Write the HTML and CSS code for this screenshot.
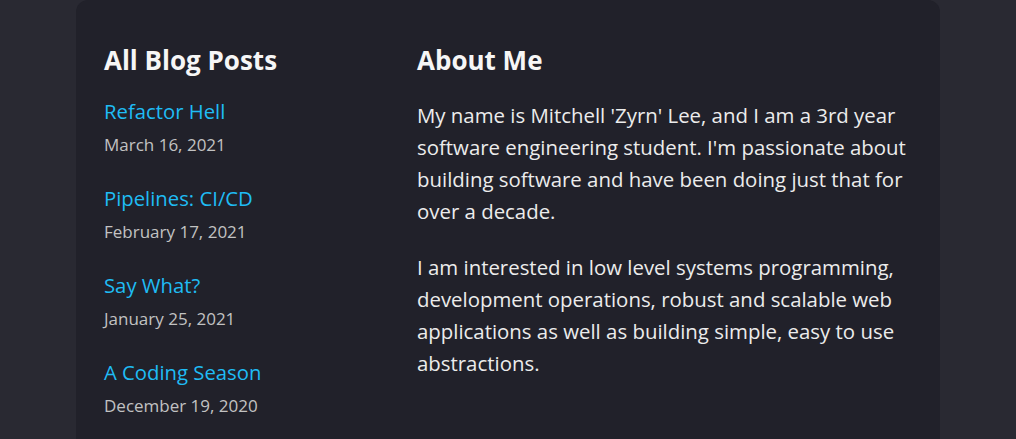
FILE: index.html
```html
<!DOCTYPE html>
<html>
<head>
<meta charset="utf-8">
<link rel="stylesheet" href="styles.css">
</head>
<body>
<main class="card">
  <section class="posts">
    <h2 class="heading">All Blog Posts</h2>
    <ul class="post-list">
      <li class="post"><a class="post-title" href="#">Refactor Hell</a><span class="post-date">March 16, 2021</span></li>
      <li class="post"><a class="post-title" href="#">Pipelines: CI/CD</a><span class="post-date">February 17, 2021</span></li>
      <li class="post"><a class="post-title" href="#">Say What?</a><span class="post-date">January 25, 2021</span></li>
      <li class="post"><a class="post-title" href="#">A Coding Season</a><span class="post-date">December 19, 2020</span></li>
    </ul>
  </section>
  <section class="about">
    <h2 class="heading heading-about">About Me</h2>
    <p class="about-text">My name is Mitchell 'Zyrn' Lee, and I am a 3rd year software engineering student. I'm passionate about building software and have been doing just that for over a decade.</p>
    <p class="about-text">I am interested in low level systems programming, development operations, robust and scalable web applications as well as building simple, easy to use abstractions.</p>
  </section>
</main>
</body>
</html>
```
FILE: styles.css
```css
html, body {
  margin: 0;
  padding: 0;
  background: #292932;
  font-family: "Open Sans", "Noto Sans", sans-serif;
  color: #ececec;
}
.card {
  width: 864px;
  margin: 0 auto;
  min-height: 460px;
  box-sizing: border-box;
  background: #21212a;
  border-radius: 12px 12px 0 0;
  padding: 42px 28px 0 28px;
  display: grid;
  grid-template-columns: 285px 1fr;
  column-gap: 28px;
}
.heading {
  margin: 0 0 17px;
  font-size: 26px;
  line-height: 36px;
  font-weight: 700;
  color: #f6f6f6;
}
.heading-about {
  margin-bottom: 21px;
}
.post-list {
  list-style: none;
  margin: 0;
  padding: 0;
  display: flex;
  flex-direction: column;
  gap: 21px;
}
.post {
  display: flex;
  flex-direction: column;
}
.post-title {
  color: #1fbcf4;
  text-decoration: none;
  font-size: 20.3px;
  line-height: 32px;
}
.post-date {
  color: #c2c2c2;
  font-size: 17px;
  line-height: 32px;
  padding-top: 2px;
}
.about-text {
  margin: 0 0 24px;
  font-size: 20.4px;
  line-height: 32px;
  color: #ececec;
}
```
